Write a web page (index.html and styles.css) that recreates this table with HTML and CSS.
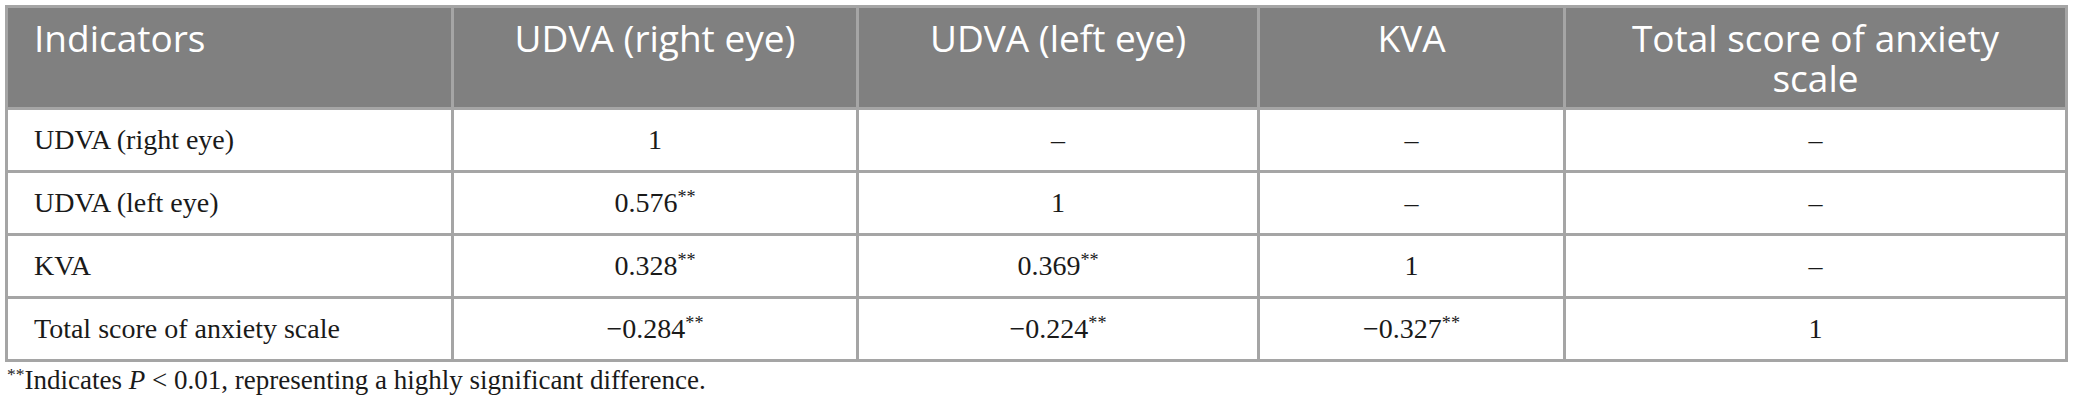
FILE: index.html
```html
<!DOCTYPE html>
<html lang="en">
<head>
    <meta charset="UTF-8">
    <meta name="viewport" content="width=device-width, initial-scale=1.0">
    <title>Correlation between visual acuity and anxiety</title>
    <link rel="stylesheet" href="styles.css">
</head>
<body>
    <table class="data-table">
        <colgroup>
            <col class="col-name">
            <col class="col-right">
            <col class="col-left">
            <col class="col-kva">
            <col class="col-total">
        </colgroup>
        <thead>
            <tr>
                <th class="first">Indicators</th>
                <th>UDVA (right eye)</th>
                <th>UDVA (left eye)</th>
                <th>KVA</th>
                <th>Total score of anxiety scale</th>
            </tr>
        </thead>
        <tbody>
            <tr>
                <td class="first">UDVA (right eye)</td>
                <td>1</td>
                <td>–</td>
                <td>–</td>
                <td>–</td>
            </tr>
            <tr>
                <td class="first">UDVA (left eye)</td>
                <td>0.576<sup>**</sup></td>
                <td>1</td>
                <td>–</td>
                <td>–</td>
            </tr>
            <tr>
                <td class="first">KVA</td>
                <td>0.328<sup>**</sup></td>
                <td>0.369<sup>**</sup></td>
                <td>1</td>
                <td>–</td>
            </tr>
            <tr>
                <td class="first">Total score of anxiety scale</td>
                <td>−0.284<sup>**</sup></td>
                <td>−0.224<sup>**</sup></td>
                <td>−0.327<sup>**</sup></td>
                <td>1</td>
            </tr>
        </tbody>
    </table>
    <p class="footnote"><sup>**</sup>Indicates <i>P</i> &lt; 0.01, representing a highly significant difference.</p>
</body>
</html>
```

FILE: styles.css
```css
body {
    margin: 0;
    padding: 5px 0 0 5px;
    background-color: #ffffff;
    font-family: 'Liberation Serif', 'Times New Roman', serif;
    color: #1a1a1a;
}

.data-table {
    border-collapse: collapse;
    table-layout: fixed;
    width: 2063px;
}

.col-name { width: 446px; }
.col-right { width: 405px; }
.col-left { width: 401px; }
.col-kva { width: 306px; }
.col-total { width: 502px; }

.data-table th,
.data-table td {
    border: 3px solid #a5a5a5;
}

.data-table th {
    background-color: #808080;
    color: #ffffff;
    font-family: 'Open Sans', 'Liberation Sans', sans-serif;
    font-weight: 400;
    font-size: 37px;
    line-height: 40px;
    height: 80px;
    padding: 10px 32px 9px;
    text-align: center;
    vertical-align: top;
}

.data-table th.first {
    text-align: left;
    padding-left: 26px;
}

.data-table td {
    font-size: 28px;
    line-height: 30px;
    height: 30px;
    padding: 15px 20px 15px;
    text-align: center;
    vertical-align: middle;
}

.data-table td.first {
    text-align: left;
    padding-left: 26px;
}

sup {
    font-size: 0.65em;
    line-height: 0;
    vertical-align: 0.5em;
}

.footnote {
    margin: 3px 0 0 2px;
    font-size: 27px;
    line-height: 30px;
}
```
